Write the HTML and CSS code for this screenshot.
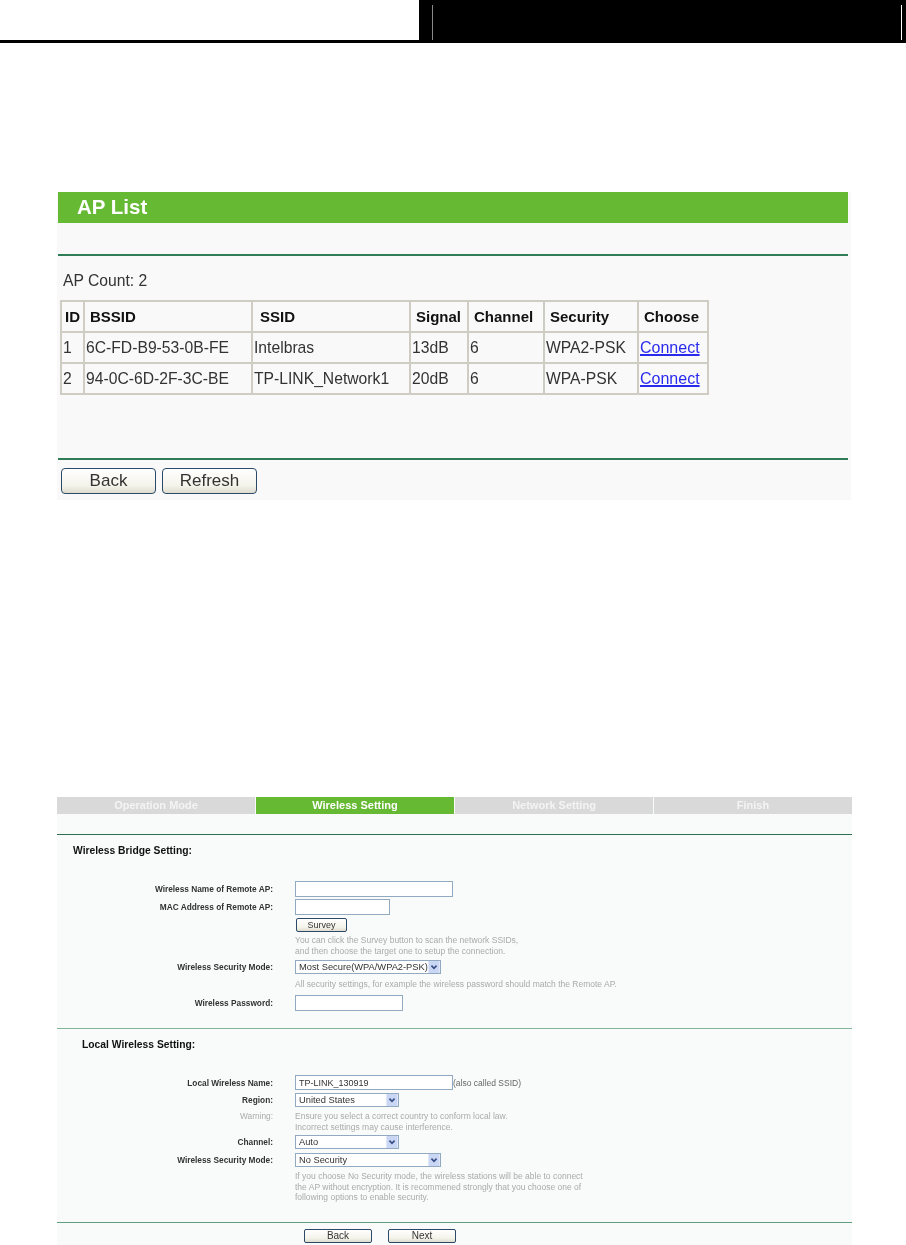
FILE: index.html
```html
<!DOCTYPE html>
<html lang="en">
<head>
    <meta charset="UTF-8">
    <meta name="viewport" content="width=device-width, initial-scale=1.0">
    <title>AP List and Wireless Setting</title>
    <link rel="stylesheet" href="styles.css">
</head>
<body>
    <header class="page-header">
        <div class="header-left"></div>
        <div class="header-right"><div class="header-inner"></div></div>
    </header>

    <section class="ap-panel">
        <h1 class="ap-title">AP List</h1>
        <div class="ap-rule ap-rule-top"></div>
        <p class="ap-count">AP Count: 2</p>
        <table class="ap-table">
            <colgroup>
                <col class="col-id"><col class="col-bssid"><col class="col-ssid"><col class="col-signal">
                <col class="col-channel"><col class="col-security"><col class="col-choose">
            </colgroup>
            <thead>
                <tr>
                    <th class="center">ID</th>
                    <th>BSSID</th>
                    <th class="th-ssid">SSID</th>
                    <th>Signal</th>
                    <th>Channel</th>
                    <th>Security</th>
                    <th>Choose</th>
                </tr>
            </thead>
            <tbody>
                <tr>
                    <td>1</td>
                    <td>6C-FD-B9-53-0B-FE</td>
                    <td>Intelbras</td>
                    <td>13dB</td>
                    <td>6</td>
                    <td>WPA2-PSK</td>
                    <td><a href="#" class="ap-link">Connect</a></td>
                </tr>
                <tr>
                    <td>2</td>
                    <td>94-0C-6D-2F-3C-BE</td>
                    <td>TP-LINK_Network1</td>
                    <td>20dB</td>
                    <td>6</td>
                    <td>WPA-PSK</td>
                    <td><a href="#" class="ap-link">Connect</a></td>
                </tr>
            </tbody>
        </table>
        <div class="ap-rule ap-rule-bottom"></div>
        <div class="ap-actions">
            <button class="btn btn-large">Back</button>
            <button class="btn btn-large">Refresh</button>
        </div>
    </section>

    <section class="wizard">
        <nav class="wizard-tabs">
            <div class="wizard-tab">Operation Mode</div>
            <div class="wizard-tab active">Wireless Setting</div>
            <div class="wizard-tab">Network Setting</div>
            <div class="wizard-tab">Finish</div>
        </nav>

        <div class="wizard-section section-bridge">
            <h2 class="section-title">Wireless Bridge Setting:</h2>
            <div class="row row-name">
                <label class="row-label">Wireless Name of Remote AP:</label>
                <input class="field field-long" type="text">
            </div>
            <div class="row row-mac">
                <label class="row-label">MAC Address of Remote AP:</label>
                <input class="field field-mac" type="text">
            </div>
            <div class="row row-survey">
                <span></span>
                <button class="btn btn-survey">Survey</button>
            </div>
            <div class="row row-help">
                <span></span>
                <p class="help">You can click the Survey button to scan the network SSIDs,<br>and then choose the target one to setup the connection.</p>
            </div>
            <div class="row row-mode">
                <label class="row-label">Wireless Security Mode:</label>
                <div class="select-wrap select-wide">
                    <select class="select"><option>Most Secure(WPA/WPA2-PSK)</option></select>
                    <svg class="select-arrow" viewBox="0 0 13 14"><rect width="13" height="14" fill="#c9d6f4"/><path d="M3.5 5.5 6.5 8.5 9.5 5.5" fill="none" stroke="#3a4f86" stroke-width="2"/></svg>
                </div>
            </div>
            <div class="row row-help-one">
                <span></span>
                <p class="help">All security settings, for example the wireless password should match the Remote AP.</p>
            </div>
            <div class="row">
                <label class="row-label">Wireless Password:</label>
                <input class="field field-password" type="text">
            </div>
        </div>

        <div class="wizard-section section-local">
            <h2 class="section-title title-local">Local Wireless Setting:</h2>
            <div class="row row-local-name">
                <label class="row-label">Local Wireless Name:</label>
                <div class="field-line">
                    <input class="field field-long field-slim" type="text" value="TP-LINK_130919">
                    <span class="field-note">(also called SSID)</span>
                </div>
            </div>
            <div class="row row-region">
                <label class="row-label">Region:</label>
                <div class="select-wrap select-short">
                    <select class="select"><option>United States</option></select>
                    <svg class="select-arrow" viewBox="0 0 13 14"><rect width="13" height="14" fill="#c9d6f4"/><path d="M3.5 5.5 6.5 8.5 9.5 5.5" fill="none" stroke="#3a4f86" stroke-width="2"/></svg>
                </div>
            </div>
            <div class="row row-warning">
                <label class="row-label muted">Warning:</label>
                <p class="help">Ensure you select a correct country to conform local law.<br>Incorrect settings may cause interference.</p>
            </div>
            <div class="row row-channel">
                <label class="row-label">Channel:</label>
                <div class="select-wrap select-short">
                    <select class="select"><option>Auto</option></select>
                    <svg class="select-arrow" viewBox="0 0 13 14"><rect width="13" height="14" fill="#c9d6f4"/><path d="M3.5 5.5 6.5 8.5 9.5 5.5" fill="none" stroke="#3a4f86" stroke-width="2"/></svg>
                </div>
            </div>
            <div class="row row-local-mode">
                <label class="row-label">Wireless Security Mode:</label>
                <div class="select-wrap select-wide">
                    <select class="select"><option>No Security</option></select>
                    <svg class="select-arrow" viewBox="0 0 13 14"><rect width="13" height="14" fill="#c9d6f4"/><path d="M3.5 5.5 6.5 8.5 9.5 5.5" fill="none" stroke="#3a4f86" stroke-width="2"/></svg>
                </div>
            </div>
            <div class="row">
                <span></span>
                <p class="help">If you choose No Security mode, the wireless stations will be able to connect<br>the AP without encryption. It is recommened strongly that you choose one of<br>following options to enable security.</p>
            </div>
        </div>

        <div class="wizard-actions">
            <button class="btn btn-wizard">Back</button>
            <button class="btn btn-wizard">Next</button>
        </div>
    </section>
</body>
</html>
```

FILE: styles.css
```css
body {
    font-family: "Liberation Sans", Arial, sans-serif;
    margin: 0;
    padding: 0;
    background-color: white;
}
p, h1, h2 {
    margin: 0;
}

/* page header */
.page-header {
    display: flex;
    height: 43px;
}
.header-left {
    width: 419px;
    height: 40px;
    border-bottom: 3px solid black;
}
.header-right {
    flex: 1;
    background-color: black;
    padding: 5px 4px 3px 13px;
}
.header-inner {
    height: 35px;
    border-left: 1px solid #8a8a8a;
    border-right: 1px solid white;
}

/* AP list */
.ap-panel {
    width: 790px;
    height: 308px;
    margin: 149px 0 0 57px;
    padding: 0 3px 0 1px;
    background-color: #f9f9f9;
    filter: blur(0.4px);
}
.ap-title {
    height: 31px;
    padding-left: 19px;
    background-color: #66b933;
    color: white;
    font-size: 20.5px;
    line-height: 30px;
    font-weight: bold;
}
.ap-rule {
    height: 2px;
    background-color: #2f7d57;
}
.ap-rule-top {
    margin-top: 31px;
}
.ap-rule-bottom {
    margin-top: 63px;
}
.ap-count {
    margin: 15px 0 0 5px;
    height: 20px;
    color: #333;
    font-size: 15.7px;
    line-height: 20px;
}
.ap-table {
    margin: 9px 0 0 2px;
    width: 647px;
    table-layout: fixed;
    border-collapse: collapse;
    border: 2px solid #c9c5bc;
    color: #333;
    font-size: 15.7px;
}
.col-id { width: 23px; }
.col-bssid { width: 168px; }
.col-ssid { width: 158px; }
.col-signal { width: 58px; }
.col-channel { width: 76px; }
.col-security { width: 94px; }
.col-choose { width: 70px; }
.ap-table th,
.ap-table td {
    height: 29px;
    padding: 0 0 0 1px;
    border: 2px solid #cfccc4;
    text-align: left;
}
.ap-table th {
    padding-left: 5px;
    color: #111;
    font-size: 15px;
    font-weight: bold;
}
.ap-table th.center {
    padding-left: 0;
    text-align: center;
}
.ap-table th.th-ssid {
    padding-left: 7px;
}
.ap-link {
    color: #2a2aee;
    font-size: 16px;
    text-decoration-thickness: 2px;
}
.ap-actions {
    display: flex;
    gap: 6px;
    margin: 8px 0 0 3px;
}

/* buttons */
.btn {
    padding: 0;
    border: 1px solid #2c4a68;
    border-radius: 4px;
    background: linear-gradient(#ffffff, #f4f3ea 70%, #dedccf);
    color: #333;
    font-family: inherit;
}
.btn-large {
    width: 95px;
    height: 26px;
    font-size: 17px;
}
.btn-survey {
    width: 51px;
    height: 14px;
    margin-left: 1px;
    border-radius: 2px;
    font-size: 9px;
    line-height: 12px;
}
.btn-wizard {
    width: 68px;
    height: 14px;
    border-radius: 2px;
    font-size: 10px;
    line-height: 12px;
}

/* quick setup wizard */
.wizard {
    width: 795px;
    height: 448px;
    margin: 297px 0 0 57px;
    background-color: #f9fafa;
    filter: blur(0.4px);
}
.wizard-tabs {
    display: grid;
    grid-template-columns: 198px 198px 198px 198px;
    column-gap: 1px;
    height: 17px;
}
.wizard-tab {
    background-color: #d9d9d9;
    color: #f4f4f4;
    font-size: 11px;
    font-weight: bold;
    line-height: 17px;
    text-align: center;
}
.wizard-tab.active {
    background-color: #66b933;
    color: white;
}
.wizard-section {
    border-top: 1px solid #2f6f50;
    color: #333;
    font-size: 8.5px;
}
.section-bridge {
    margin-top: 20px;
    height: 193px;
}
.section-local {
    height: 193px;
    border-top-color: #7fb59a;
}
.section-title {
    height: 12px;
    margin-bottom: 24px;
    padding: 10px 0 0 16px;
    color: #111;
    font-size: 10.3px;
    font-weight: bold;
    line-height: 12px;
}
.title-local {
    margin-bottom: 24px;
    padding-left: 25px;
}
.row {
    display: grid;
    grid-template-columns: 216px 1fr;
    column-gap: 22px;
    align-items: center;
}
.row-name { margin-bottom: 2px; }
.row-mac { margin-bottom: 3px; }
.row-survey { margin-bottom: 3px; }
.row-help { margin-bottom: 4px; }
.row-mode { margin-bottom: 5px; }
.row-help-one { margin-bottom: 5px; }
.row-local-name { margin-bottom: 3px; }
.row-region { margin-bottom: 4px; }
.row-warning { margin-bottom: 3px; }
.row-channel { margin-bottom: 4px; }
.row-local-mode { margin-bottom: 4px; }
.row-label {
    color: #333;
    font-size: 8.3px;
    font-weight: bold;
    text-align: right;
}
.row-label.muted {
    align-self: start;
    color: #aaa;
    font-weight: normal;
}
.help {
    color: #aaa;
    line-height: 10.5px;
}
.field {
    box-sizing: border-box;
    display: block;
    height: 16px;
    padding: 0 3px;
    border: 1px solid #92a9c2;
    background-color: white;
    color: #333;
    font-family: inherit;
    font-size: 9px;
}
.field-long { width: 158px; }
.field-mac { width: 95px; }
.field-password { width: 108px; }
.field-slim { height: 15px; }
.field-line {
    display: flex;
    align-items: center;
}
.field-note {
    color: #666;
}
.select-wrap {
    position: relative;
    height: 14px;
}
.select-wide { width: 146px; }
.select-short { width: 104px; }
.select {
    box-sizing: border-box;
    display: block;
    width: 100%;
    height: 14px;
    padding: 0 0 0 3px;
    border: 1px solid #92a9c2;
    border-radius: 0;
    appearance: none;
    background-color: white;
    color: #333;
    font-family: inherit;
    font-size: 9.3px;
}
.select-arrow {
    position: absolute;
    top: 1px;
    right: 1px;
    width: 12px;
    height: 12px;
}
.wizard-actions {
    display: flex;
    gap: 16px;
    padding: 6px 0 0 247px;
    border-top: 1px solid #5f9f80;
}
```
